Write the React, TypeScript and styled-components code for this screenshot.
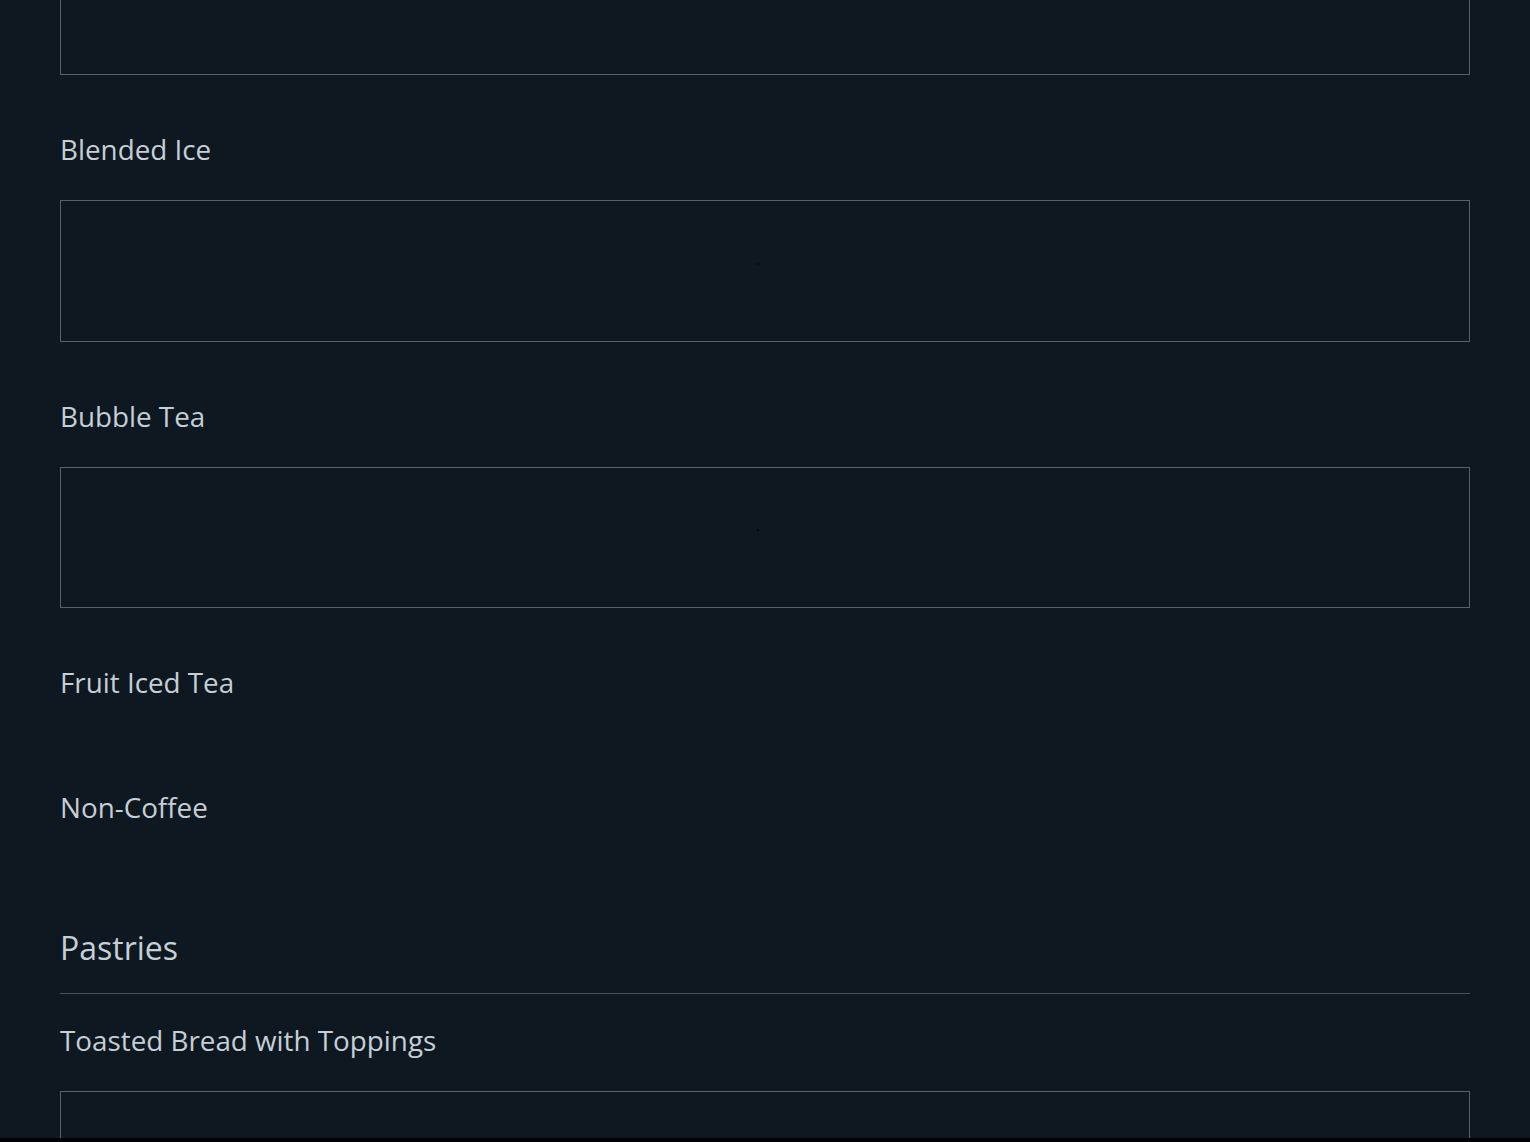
import styled, { createGlobalStyle } from 'styled-components';

const GlobalStyle = createGlobalStyle`
	html, body {
		margin: 0;
		padding: 0;
		background: #0e1821;
		color: #c6ced6;
		font-family: 'Open Sans', 'Noto Sans', sans-serif;
	}
	* {
		box-sizing: border-box;
	}
`;

const Menu = styled.main`
	display: flex;
	flex-direction: column;
	padding: 0 60px;
	min-height: 1142px;
	overflow: hidden;
`;

const Category = styled.section`
	display: flex;
	flex-direction: column;
	padding-top: 12px;
`;

const Group = styled.section<{ $first?: boolean }>`
	display: flex;
	flex-direction: column;
	padding-top: ${(p) => (p.$first ? '31px' : '0')};
`;

const GroupTitle = styled.h3`
	margin: 0 0 35px;
	font-size: 27.8px;
	line-height: 31px;
	font-weight: 400;
	color: #c6ced6;
`;

const CategoryTitle = styled.h2`
	margin: 0;
	padding-bottom: 26px;
	font-size: 32px;
	line-height: 38px;
	font-weight: 400;
	color: #c6ced6;
	border-bottom: 1px solid #4a535c;
`;

const ItemStrip = styled.div<{ $cut?: boolean }>`
	display: flex;
	align-items: center;
	justify-content: center;
	height: ${(p) => (p.$cut ? '75px' : '141.5px')};
	border: 1px solid #58616b;
	border-top: ${(p) => (p.$cut ? 'none' : '1px solid #58616b')};
	margin-bottom: 59px;
	overflow-x: auto;
`;

const EmptyStrip = styled.div`
	height: 0;
	margin-bottom: 59px;
`;

const Loader = styled.span`
	width: 2px;
	height: 2px;
	background: #05080b;
	border-radius: 50%;
	margin-right: 14px;
	margin-bottom: 14px;
`;

const BottomEdge = styled.div`
	position: fixed;
	left: 0;
	right: 0;
	bottom: 0;
	height: 4px;
	background: #000;
`;

const groups: { title: string; items: boolean }[] = [
	{ title: 'Blended Ice', items: true },
	{ title: 'Bubble Tea', items: true },
	{ title: 'Fruit Iced Tea', items: false },
	{ title: 'Non-Coffee', items: false },
];

export default function App() {
	return (
		<>
			<GlobalStyle />
			<Menu>
				<ItemStrip $cut />
				{groups.map((g) => (
					<Group key={g.title}>
						<GroupTitle>{g.title}</GroupTitle>
						{g.items ? (
							<ItemStrip>
								<Loader />
							</ItemStrip>
						) : (
							<EmptyStrip />
						)}
					</Group>
				))}
				<Category>
					<CategoryTitle>Pastries</CategoryTitle>
					<Group $first>
						<GroupTitle>Toasted Bread with Toppings</GroupTitle>
						<ItemStrip>
							<Loader />
						</ItemStrip>
					</Group>
				</Category>
			</Menu>
			<BottomEdge />
		</>
	);
}
